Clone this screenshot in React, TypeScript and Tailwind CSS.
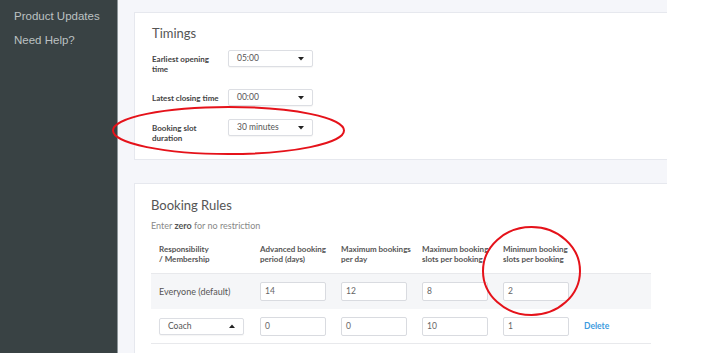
import React from 'react';

const Caret = ({ up = false }: { up?: boolean }) => (
  <svg width="6" height="4" viewBox="0 0 6 4" className="shrink-0">
    <path d={up ? 'M0 4 L3 0.5 L6 4 Z' : 'M0 0 L3 3.5 L6 0 Z'} fill="#222" />
  </svg>
);

const Select = ({ value, up = false, className = '' }: { value: string; up?: boolean; className?: string }) => (
  <div
    className={`flex h-[17px] w-[85px] items-center justify-between rounded-[2px] border border-[#dcdee3] bg-white pl-[8px] pr-[8px] text-[8.5px] text-[#555] shadow-[0_1px_1px_rgba(0,0,0,0.04)] ${className}`}
  >
    <span>{value}</span>
    <Caret up={up} />
  </div>
);

const NumInput = ({ value }: { value: string }) => (
  <div className="flex h-[19px] w-[66px] items-center rounded-[2px] border border-[#d9dbe0] bg-white pl-[4px] text-[8.5px] text-[#666]">
    {value}
  </div>
);

const TimingRow = ({ label, value, className = '' }: { label: React.ReactNode; value: string; className?: string }) => (
  <div className={`flex items-start ${className}`}>
    <div className="w-[76px] pt-[4px] text-[8px] font-bold leading-[10px] text-[#444]">{label}</div>
    <Select value={value} />
  </div>
);

const headers = [
  'Advanced booking\nperiod (days)',
  'Maximum bookings\nper day',
  'Maximum booking\nslots per booking',
  'Minimum booking\nslots per booking',
];

export default function App() {
  return (
    <div className="relative flex h-[353px] w-[726px] overflow-hidden bg-white">
      <aside className="w-[118px] shrink-0 border-r border-[#8e969a] bg-[#394244] pl-[14px] pt-[8px] font-['Liberation_Sans',Arial,sans-serif] text-[11.5px] leading-[16px] text-[#bcc1c2]">
        <div className="h-[24px]">Product Updates</div>
        <div>Need Help?</div>
      </aside>

      <main className="w-[549px] shrink-0 overflow-hidden bg-[#f5f6fa] pl-[16px] pt-[12px] font-['Lato',sans-serif]">
        <section className="h-[148px] w-[540px] border border-[#e6e8ee] bg-white pl-[17px] pt-[12px]">
          <h2 className="text-[13px] leading-[16px] text-[#555]">Timings</h2>
          <TimingRow className="mt-[9px]" label={<>Earliest opening<br />time</>} value="05:00" />
          <TimingRow className="mt-[15px]" label="Latest closing time" value="00:00" />
          <TimingRow className="mt-[13px]" label={<>Booking slot<br />duration</>} value="30 minutes" />
        </section>

        <section className="mt-[23px] h-[200px] w-[540px] border border-[#e6e8ee] bg-white pl-[16px] pt-[13px]">
          <h2 className="text-[13px] leading-[16px] text-[#555]">Booking Rules</h2>
          <p className="mt-[7px] text-[9px] leading-[12px] text-[#888]">
            Enter <span className="font-bold text-[#555]">zero</span> for no restriction
          </p>

          <div className="mt-[8px] w-[500px] text-[#555]">
            <div className="flex border-b border-[#e8e9ec] pb-[9px] pt-[4px] text-[8px] font-bold leading-[10px]">
              <div className="w-[109px] pl-[8px]">
                Responsibility
                <br />/ Membership
              </div>
              {headers.map(h => (
                <div key={h} className="w-[81px] whitespace-pre-line">
                  {h}
                </div>
              ))}
            </div>

            <div className="flex h-[35px] items-center bg-[#f5f6f8]">
              <div className="w-[109px] pl-[8px] text-[9px]">Everyone (default)</div>
              {['14', '12', '8', '2'].map((v, i) => (
                <div key={i} className="w-[81px]">
                  <NumInput value={v} />
                </div>
              ))}
            </div>

            <div className="flex h-[35px] items-center border-b border-[#e8e9ec]">
              <div className="w-[109px] pl-[8px]">
                <Select value="Coach" up />
              </div>
              {['0', '0', '10', '1'].map((v, i) => (
                <div key={i} className="w-[81px]">
                  <NumInput value={v} />
                </div>
              ))}
              <div className="text-[8.5px] font-bold text-[#3d9be0]">Delete</div>
            </div>
          </div>
        </section>
      </main>

      <svg className="pointer-events-none absolute left-0 top-0" width="726" height="353">
        <ellipse cx="228.5" cy="130.5" rx="115.5" ry="23.5" fill="none" stroke="#e5121a" strokeWidth="2" />
        <ellipse cx="531.5" cy="271" rx="48.5" ry="44" fill="none" stroke="#e5121a" strokeWidth="2" />
      </svg>
    </div>
  );
}
